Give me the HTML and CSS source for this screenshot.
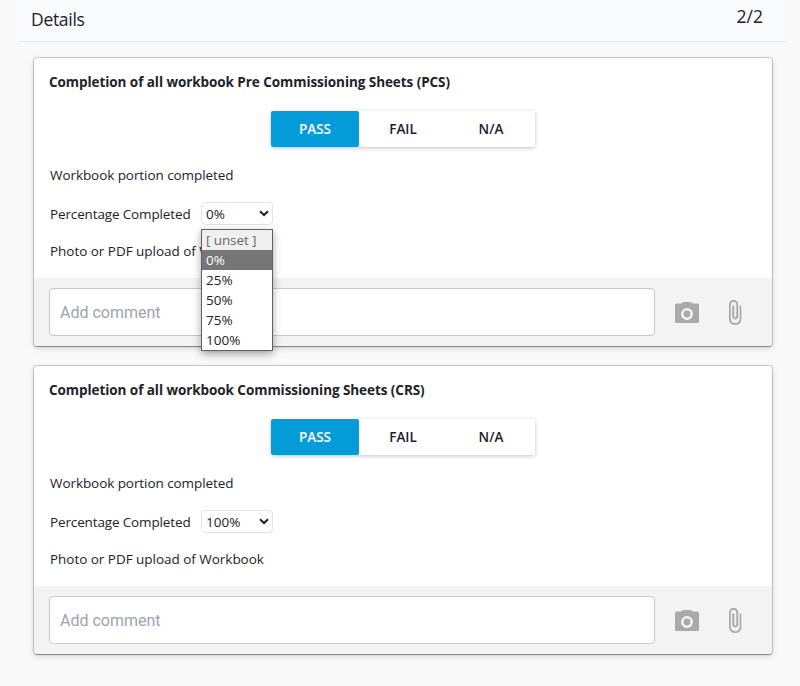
FILE: index.html
```html
<!DOCTYPE html>
<html lang="en">
<head>
<meta charset="utf-8">
<title>Details</title>
<link rel="stylesheet" href="styles.css">
</head>
<body>
<svg class="sprite" aria-hidden="true">
  <symbol id="camera" viewBox="0 0 24 21">
    <path fill-rule="evenodd" d="M8.6 0h6.8q.6 0 1 .4L17.8 1.500H22.400q1.600 0 1.600 1.600V19.400q0 1.600-1.600 1.600H1.600Q0 21 0 19.400V3.100Q0 1.500 1.600 1.500H6.200L7.600.4Q8 0 8.600 0zM12 6a6 6 0 1 0 0 12a6 6 0 1 0 0-12z"/>
    <circle cx="12" cy="12" r="3.400"/>
  </symbol>
  <symbol id="clip" viewBox="7 1 11 22">
    <path d="M16.500 6v11.500c0 2.210-1.790 4-4 4s-4-1.790-4-4V5c0-1.380 1.120-2.500 2.500-2.500s2.500 1.120 2.500 2.500v10.500c0 .55-.45 1-1 1s-1-.45-1-1V6H10v9.500c0 1.380 1.120 2.500 2.500 2.500s2.500-1.120 2.500-2.500V5c0-2.210-1.790-4-4-4S7 2.790 7 5v12.500c0 3.040 2.460 5.500 5.500 5.500s5.500-2.460 5.500-5.500V6h-1.500z"/>
  </symbol>
  <symbol id="chevron" viewBox="0 0 10 7">
    <path d="M1 1.200L5 5L9 1.200" fill="none" stroke="#1d2129" stroke-width="2"/>
  </symbol>
</svg>
<header class="header">
  <h1 class="header-title">Details</h1>
  <span class="header-count">2/2</span>
</header>
<main class="cards">
  <section class="card">
    <div class="card-body">
      <h2 class="card-title">Completion of all workbook Pre Commissioning Sheets (PCS)</h2>
      <div class="choices">
        <button class="choice selected">PASS</button><button class="choice">FAIL</button><button class="choice">N/A</button>
      </div>
      <p class="line">Workbook portion completed</p>
      <div class="field">
        <span class="field-label">Percentage Completed</span>
        <div class="select">
          <span>0%</span><svg class="chevron"><use href="#chevron"/></svg>
          <ul class="menu">
            <li class="unset">[ unset ]</li>
            <li class="active">0%</li>
            <li>25%</li>
            <li>50%</li>
            <li>75%</li>
            <li>100%</li>
          </ul>
        </div>
      </div>
      <p class="line upload">Photo or PDF upload of Workbook</p>
    </div>
    <footer class="card-footer">
      <div class="comment">Add comment</div>
      <svg class="camera"><use href="#camera"/></svg>
      <svg class="clip"><use href="#clip"/></svg>
    </footer>
  </section>
  <section class="card">
    <div class="card-body">
      <h2 class="card-title">Completion of all workbook Commissioning Sheets (CRS)</h2>
      <div class="choices">
        <button class="choice selected">PASS</button><button class="choice">FAIL</button><button class="choice">N/A</button>
      </div>
      <p class="line">Workbook portion completed</p>
      <div class="field">
        <span class="field-label">Percentage Completed</span>
        <div class="select">
          <span>100%</span><svg class="chevron"><use href="#chevron"/></svg>
        </div>
      </div>
      <p class="line upload">Photo or PDF upload of Workbook</p>
    </div>
    <footer class="card-footer">
      <div class="comment">Add comment</div>
      <svg class="camera"><use href="#camera"/></svg>
      <svg class="clip"><use href="#clip"/></svg>
    </footer>
  </section>
</main>
</body>
</html>
```
FILE: styles.css
```css
* { box-sizing: border-box; }
body {
  margin: 0;
  height: 686px;
  overflow: hidden;
  background: #f9f9f9;
  color: #1d2129;
  font: 13.5px/20px "Open Sans", "Noto Sans", sans-serif;
}
.sprite { position: absolute; width: 0; height: 0; }
h1, h2, p, ul { margin: 0; padding: 0; font-weight: 400; }

.header {
  display: flex;
  justify-content: space-between;
  height: 42px;
  margin: 0 13px 0 19px;
  padding: 0 24px 0 12px;
  background: #f8fafc;
  border-bottom: 1px solid #e2e6ea;
}
.header-title { font-size: 17.5px; line-height: 38px; letter-spacing: -.3px; }
.header-count { font-size: 17.5px; line-height: 32px; }

.cards {
  display: grid;
  gap: 20px;
  padding: 16px 28px 0 34px;
}
.card {
  height: 288px;
  background: #fff;
  border-radius: 3px;
  box-shadow: 0 0 0 1px rgba(0, 0, 0, .16), 0 1px 1px rgba(0, 0, 0, .3), 0 2px 6px rgba(0, 0, 0, .16);
}
.card-body { height: 220px; padding: 14px 16px 0; }
.card-title {
  margin-left: -1px;
  font-size: 13.5px;
  font-weight: 700;
  line-height: 20px;
  letter-spacing: -.065px;
  white-space: nowrap;
}
.choices {
  display: flex;
  width: 264px;
  margin: 19px auto 0 221px;
  border-radius: 2px;
  box-shadow: 0 1px 4px rgba(0, 0, 0, .24);
}
.choice {
  width: 88px;
  height: 36px;
  padding: 0;
  border: 0;
  border-radius: 2px;
  background: #fff;
  color: #1d2129;
  font: 600 13.5px/36px "Open Sans", sans-serif;
}
.choice.selected { background: #049cd8; color: #fff; }
.line { margin-top: 18px; letter-spacing: -.07px; white-space: nowrap; }
.field { display: flex; align-items: center; height: 23px; margin-top: 17px; }
.field-label { width: 151px; letter-spacing: -.14px; white-space: nowrap; }
.select {
  position: relative;
  display: flex;
  align-items: center;
  justify-content: space-between;
  width: 72px;
  height: 23px;
  padding: 0 3px 0 4px;
  border: 1px solid #e2e4e8;
  border-radius: 4px;
  background: #fff;
}
.chevron { width: 10px; height: 7px; }
.line.upload { margin-top: 16px; letter-spacing: -.03px; }
.menu {
  position: absolute;
  z-index: 2;
  top: 26px;
  left: -1px;
  width: 72px;
  border: 1px solid #616161;
  background: #fff;
  box-shadow: 0 3px 8px rgba(0, 0, 0, .35);
  list-style: none;
}
.menu li { height: 20px; padding-left: 4px; line-height: 20px; white-space: nowrap; }
.menu .unset { background: #efefef; color: #666; letter-spacing: -.1px; }
.menu .active { background: #767676; color: #fff; }

.card-footer {
  display: flex;
  align-items: center;
  height: 68px;
  padding-left: 15px;
  background: #f3f3f3;
  border-radius: 0 0 3px 3px;
}
.comment {
  width: 606px;
  height: 48px;
  padding-left: 10px;
  border: 1px solid #c8c8c8;
  border-radius: 4px;
  background: #fff;
  color: #9ca3af;
  font: 16px/47px Roboto, sans-serif;
}
.camera { width: 24px; height: 21px; margin-left: 20px; fill: #a9a9a9; }
.clip { width: 12.5px; height: 25px; margin-left: 30px; fill: #a9a9a9; stroke: #a9a9a9; stroke-width: .2; overflow: visible; }
```
